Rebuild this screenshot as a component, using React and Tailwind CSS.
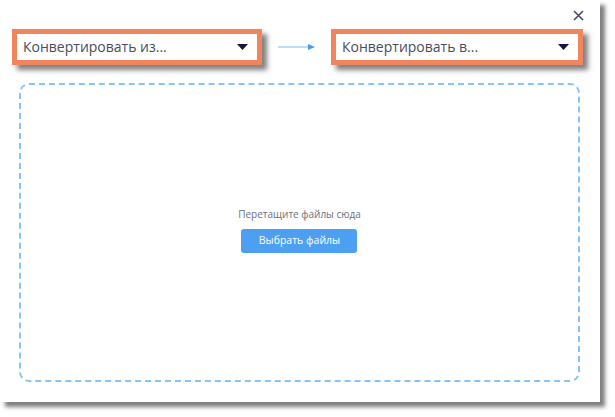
import React from "react";

function Caret() {
  return (
    <svg width="11" height="6" viewBox="0 0 11 6" className="shrink-0">
      <polygon points="0,0 11,0 5.5,6" fill="#1b1240" />
    </svg>
  );
}

function Select({ label, width }) {
  return (
    <div
      className={`${width} h-[36px] border-[5px] border-[#f0855e] bg-white flex items-center justify-between pl-[6px] pr-[9px] shadow-[5px_5px_5px_rgba(0,0,0,0.5)]`}
    >
      <span
        className="text-[14px] text-[#4b4b5c] leading-none"
        style={{ fontFamily: '"Open Sans", sans-serif' }}
      >
        {label}
      </span>
      <Caret />
    </div>
  );
}

export default function App() {
  return (
    <div className="w-[615px] h-[417px] bg-white">
      <div className="relative w-[600px] h-[402px] bg-white shadow-[5px_5px_4px_rgba(0,0,0,0.5)] flex flex-col">
        <button className="absolute top-[9px] right-[15px] w-[13px] h-[13px] flex items-center justify-center">
          <svg width="11" height="11" viewBox="0 0 11 11">
            <path d="M1 1 L10 10 M10 1 L1 10" stroke="#4a4a5c" strokeWidth="1.6" />
          </svg>
        </button>
        <div className="flex items-center pt-[29px] pl-[12px]">
          <Select label="Конвертировать из..." width="w-[250px]" />
          <div className="w-[69px] flex items-center justify-center">
            <svg width="37" height="6" viewBox="0 0 37 6">
              <line x1="0" y1="3" x2="31" y2="3" stroke="#a9d0f6" strokeWidth="1.5" />
              <polygon points="30,0 37,3 30,6" fill="#4a9cee" />
            </svg>
          </div>
          <Select label="Конвертировать в..." width="w-[252px]" />
        </div>
        <div className="ml-[19px] mt-[18px] w-[561px] h-[299px] border-2 border-dashed border-[#86c4f7] rounded-[10px] flex flex-col items-center justify-center">
          <div className="flex flex-col items-center mb-[4px]">
            <div
              className="text-[10px] text-[#6b6f80] leading-none"
              style={{ fontFamily: '"Open Sans", sans-serif' }}
            >
              Перетащите файлы сюда
            </div>
            <button
              className="mt-[10px] w-[116px] h-[24px] bg-[#4d9ff2] rounded-[3px] text-white text-[10.5px] leading-none"
              style={{ fontFamily: '"Open Sans", sans-serif' }}
            >
              Выбрать файлы
            </button>
          </div>
        </div>
      </div>
    </div>
  );
}
